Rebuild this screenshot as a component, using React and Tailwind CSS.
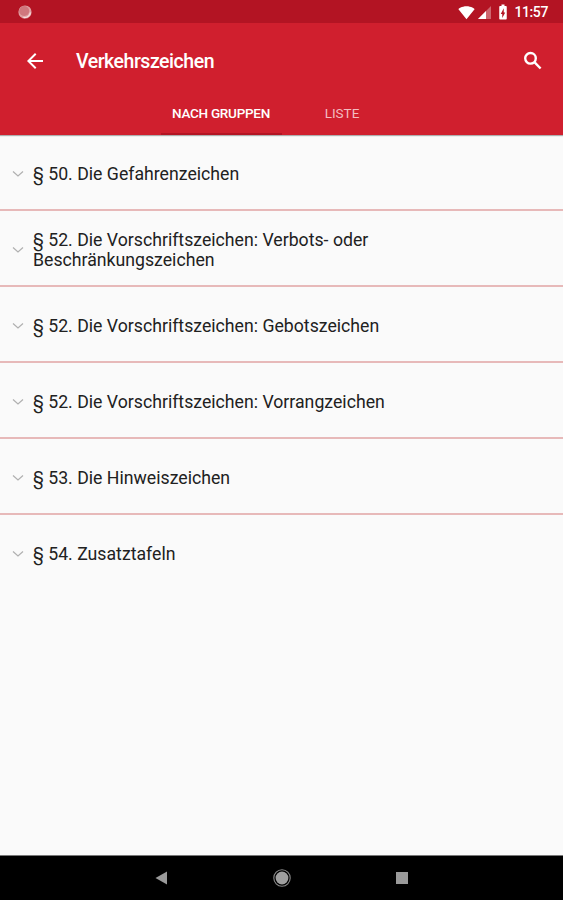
import { useState } from "react";
import { MdArrowBack, MdSignalWifi4Bar, MdBatteryChargingFull } from "react-icons/md";

const GROUPS = [
    "§ 50. Die Gefahrenzeichen",
    "§ 52. Die Vorschriftszeichen: Verbots- oder Beschränkungszeichen",
    "§ 52. Die Vorschriftszeichen: Gebotszeichen",
    "§ 52. Die Vorschriftszeichen: Vorrangzeichen",
    "§ 53. Die Hinweiszeichen",
    "§ 54. Zusatztafeln",
];

function StatusBar() {
    return (
        <div className="h-[23px] shrink-0 bg-[#b31423] flex items-center justify-between pl-[18px] pr-[15px] text-white">
            <svg className="w-[14px] h-[14px]" viewBox="0 0 14 14">
                <circle cx="7" cy="7" r="6.6" fill="#e0a0a3" />
                <circle cx="6.2" cy="6" r="5" fill="#d0777d" />
                <path d="M12.4 7.5a5.6 5.6 0 0 1-7 4.8" fill="none" stroke="#f7dcdc" strokeWidth="1.4" />
            </svg>
            <div className="flex items-center h-full pt-px">
                <MdSignalWifi4Bar className="w-[17px] h-[17px]" />
                <svg className="w-[13px] h-[13px] ml-[3px]" viewBox="0 0 13 13">
                    <path d="M13 0v13H0z" fill="#fff" fillOpacity="0.35" />
                    <path d="M8 5v8H0z" fill="#fff" />
                </svg>
                <MdBatteryChargingFull className="w-[18px] h-[18px] ml-[3px]" />
                <span className="text-[14px] leading-none font-medium tracking-[-0.4px] ml-[2px]">11:57</span>
            </div>
        </div>
    );
}

export default function App() {
    const [tab, setTab] = useState("gruppen");

    return (
        <div className="w-full h-[900px] flex flex-col bg-[#fafafa] font-['Roboto',sans-serif] overflow-hidden">
            <StatusBar />

            <header className="h-[112px] shrink-0 bg-[#d01f2e] text-white flex flex-col shadow-[0_1px_1px_rgba(0,0,0,0.3)]">
                <div className="h-[76px] flex items-center pl-[23px] pr-[18px]">
                    <button aria-label="Zurück">
                        <MdArrowBack className="w-6 h-6" />
                    </button>
                    <h1 className="flex-1 ml-[29px] pt-px text-[19.5px] leading-6 font-medium tracking-[-0.47px]">Verkehrszeichen</h1>
                    <button aria-label="Suche">
                        <svg className="w-6 h-6" viewBox="0 0 24 24" fill="none" stroke="currentColor" strokeWidth="2.4">
                            <circle cx="9.5" cy="9.3" r="5.3" />
                            <path d="M13.4 13.2l6.2 6.3" />
                        </svg>
                    </button>
                </div>
                <nav className="h-9 flex justify-center text-[13.5px] leading-4">
                    <button
                        onClick={() => setTab("gruppen")}
                        className={`w-[121px] pb-[7px] border-b-2 ${
                            tab === "gruppen" ? "font-medium tracking-[-0.27px] border-[#b31423]" : "text-[#f3bcc0] border-transparent"
                        }`}
                    >
                        NACH GRUPPEN
                    </button>
                    <button
                        onClick={() => setTab("liste")}
                        className={`w-[121px] pb-[7px] border-b-2 ${
                            tab === "liste" ? "font-medium tracking-[-0.27px] border-[#b31423]" : "text-[#f3bcc0] border-transparent"
                        }`}
                    >
                        LISTE
                    </button>
                </nav>
            </header>

            <ul className="flex-1">
                {GROUPS.map((title, i) => (
                    <li
                        key={title}
                        className={`h-[76px] flex items-center pl-3 ${
                            i < GROUPS.length - 1 ? "pt-[3px] border-b-2 border-[#e7b9b9]" : "pt-px"
                        }`}
                    >
                        <svg className="w-3 h-2 shrink-0" viewBox="0 0 12 8" fill="none" stroke="#b0b0b0" strokeWidth="1.2">
                            <path d="M1 1.5l5 4.5 5-4.5" />
                        </svg>
                        <span className="ml-[9px] w-[370px] text-[17.7px] leading-[20px] text-[#212121]">{title}</span>
                    </li>
                ))}
            </ul>

            <footer className="h-[45px] shrink-0 bg-black border-t border-[#777] flex items-center justify-center">
                <svg className="w-[13px] h-[14px]" viewBox="0 0 13 14">
                    <path d="M12 0.5v13L0.5 7z" fill="#9a9a9a" />
                </svg>
                <svg className="w-[18px] h-[18px] mx-[105px]" viewBox="0 0 18 18">
                    <circle cx="9" cy="9" r="8.2" fill="none" stroke="#8a8a8a" strokeWidth="1.1" />
                    <circle cx="9" cy="9" r="6.4" fill="#a0a0a0" />
                </svg>
                <span className="w-3 h-3 bg-[#9a9a9a]" />
            </footer>
        </div>
    );
}
